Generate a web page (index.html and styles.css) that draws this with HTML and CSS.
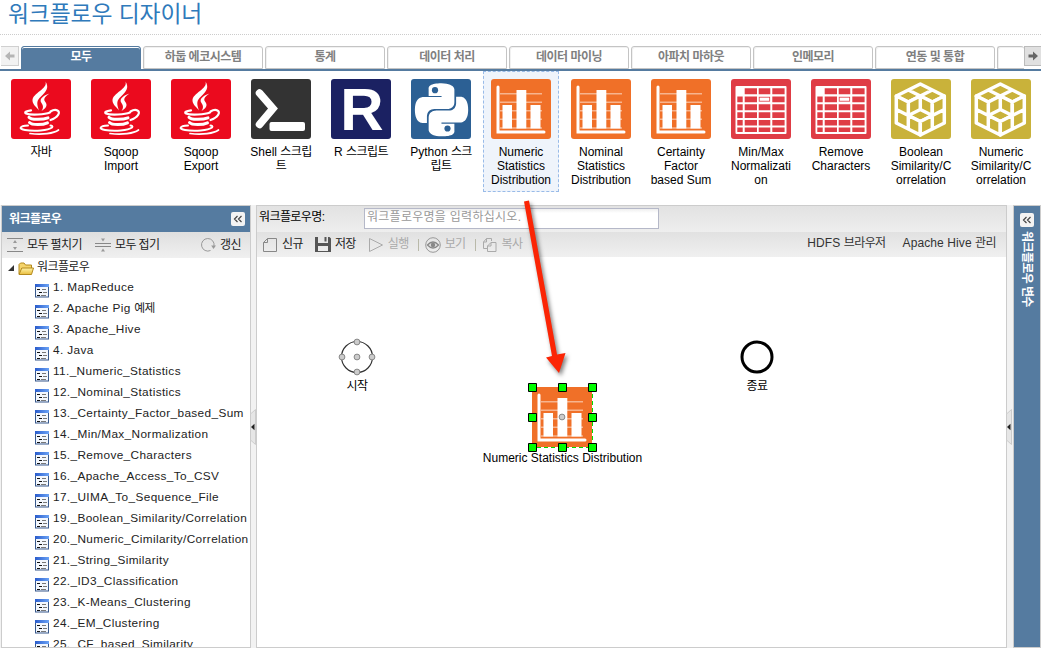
FILE: index.html
```html
<!DOCTYPE html>
<html lang="ko">
<head>
<meta charset="utf-8">
<title>워크플로우 디자이너</title>
<link rel="stylesheet" href="styles.css">
</head>
<body>
<svg class="defs" width="0" height="0">
  <symbol id="java" viewBox="0 0 60 60">
    <rect width="60" height="60" rx="3" fill="#eb0a1e"/>
    <g fill="#fff">
      <path d="M34.500 2.500C37 10 21.500 14 21.500 21.500C21.500 25.500 26 28.500 28 31.500C25.500 24.500 25.500 21.500 30 17.500C35 12.500 38.500 9 34.500 2.500Z"/>
      <path d="M38.500 14.500C31 17 28 20.500 30.500 24C32.500 27 32.500 29 30.500 32C37 28 36 25 34 22.500C32 20 34.500 17 38.500 14.500Z"/>
    </g>
    <g fill="none" stroke="#fff" stroke-linecap="round">
      <path d="M20 31.300C15 32 13 33.500 15 34.500C20 36.500 34 35.500 39 33.500" stroke-width="2.200"/>
      <path d="M39.500 32.500C45 29 50 32 47 36C45.500 38.500 42.500 40 39.500 41" stroke-width="2.200"/>
      <path d="M18 38.300C20 41 32 40.800 37 38.800M18.500 43.500C21 46.300 32 46 36.500 43.800" stroke-width="3"/>
      <path d="M17 46.500C8 47 7.500 50 14 51C24 52.500 37 51.500 41 48.500C42 47.500 41 46.500 39.500 46.500" stroke-width="2"/>
      <path d="M19 54.500C31 56 43 54.500 47.500 51" stroke-width="1.700"/>
    </g>
  </symbol>
  <symbol id="shell" viewBox="0 0 60 60">
    <rect width="60" height="60" rx="3" fill="#333"/>
    <path d="M8.500 14L22 29.500L8.500 45.500" fill="none" stroke="#fff" stroke-width="7.500" stroke-linecap="round" stroke-linejoin="miter"/>
    <rect x="18.500" y="43" width="35.500" height="9" rx="2" fill="#fff"/>
  </symbol>
  <symbol id="python" viewBox="0 0 60 60">
    <rect width="60" height="60" rx="3" fill="#2c6094"/>
    <path transform="translate(4 4.300) scale(2.210)" fill="#fff" d="M14.250.18l.9.2.73.26.59.3.45.32.34.34.25.34.16.33.1.3.04.26.02.2-.01.13V8.500l-.05.63-.13.55-.21.46-.26.38-.3.31-.33.25-.35.19-.35.14-.33.1-.3.07-.26.04-.21.02H8.770l-.69.05-.59.14-.5.22-.41.27-.33.32-.27.35-.2.36-.15.37-.1.35-.07.32-.04.27-.02.21v3.060H3.170l-.21-.03-.28-.07-.32-.12-.35-.18-.36-.26-.36-.36-.35-.46-.32-.59-.28-.73-.21-.88-.14-1.050-.05-1.230.06-1.220.16-1.040.24-.87.32-.71.36-.57.4-.44.42-.33.42-.24.4-.16.36-.1.32-.05.24-.01h.16l.06.01h8.160v-.5H6.180l-.01-3.080-.02-.37.05-.34.11-.31.17-.28.25-.26.31-.23.38-.2.44-.18.51-.15.58-.12.64-.1.71-.06.77-.04.84-.02 1.270.05zM21.040 6.110l.28.06.32.12.35.18.36.27.36.35.35.47.32.59.28.73.21.88.14 1.040.05 1.230-.06 1.230-.16 1.040-.24.86-.32.71-.36.57-.4.45-.42.33-.42.24-.4.16-.36.09-.32.05-.24.02-.16-.01h-8.220v.5h5.840l.01 3.080.02.36-.05.34-.11.31-.17.29-.25.25-.31.24-.38.2-.44.17-.51.15-.58.13-.64.09-.71.07-.77.04-.84.01-1.270-.04-1.070-.14-.9-.2-.73-.25-.59-.3-.45-.33-.34-.34-.25-.34-.16-.33-.1-.3-.04-.25-.02-.2.01-.13v-5.340l.05-.64.13-.54.21-.46.26-.38.3-.32.33-.24.35-.2.35-.14.33-.1.3-.06.26-.04.21-.02.13-.01h5.840l.69-.05.59-.14.5-.21.41-.28.33-.32.27-.35.2-.36.15-.36.1-.35.07-.32.04-.28.02-.21V6.070h2.090l.14.01z"/>
    <circle cx="24" cy="11.200" r="3.100" fill="#2c6094"/><circle cx="36.500" cy="49.500" r="3.100" fill="#2c6094"/>
  </symbol>
  <symbol id="chart" viewBox="0 0 60 60">
    <path d="M9 14.700H51M9 23.300H51M9 31.700H51M9 40.300H51M9 49H51" stroke="#fff" stroke-opacity=".48" stroke-width="1.500"/>
    <path d="M7 8V53H53" fill="none" stroke="#fff" stroke-width="3" stroke-linecap="round"/>
    <path d="M11.500 26H21V49.500H11.500ZM25.500 11H35.300V49.500H25.500ZM39.500 26H49.500V49.500H39.500Z" fill="#fff"/>
  </symbol>
  <symbol id="table" viewBox="0 0 60 60">
    <rect width="60" height="60" rx="3" fill="#df3c45"/>
    <rect x="4.500" y="7" width="51" height="48" rx="1" fill="#fff"/>
    <path fill="#df3c45" d="M13.700 9.300h12.300v6h-12.300zM27.700 9.300h11.600v6h-11.600zM41.300 9.300h12.300v6h-12.300zM6.300 17.500h5.400v5.700h-5.400zM13.700 17.500h12.300v5.700h-12.300zM41.300 17.500h12.300v5.700h-12.300zM6.300 25.200h5.400v6h-5.400zM13.700 25.200h12.300v6h-12.300zM27.700 25.200h11.600v6h-11.600zM41.300 25.200h12.300v6h-12.300zM6.300 33.300h5.400v5.700h-5.400zM13.700 33.300h12.300v5.700h-12.300zM27.700 33.300h11.600v5.700h-11.600zM41.300 33.300h12.300v5.700h-12.300zM6.300 41h5.400v5.500h-5.400zM13.700 41h12.300v5.500h-12.300zM27.700 41h11.600v5.500h-11.600zM41.300 41h12.300v5.500h-12.300zM6.300 48.500h5.400v4.500h-5.400zM13.700 48.500h12.300v4.500h-12.300zM27.700 48.500h11.600v4.500h-11.600zM41.300 48.500h12.300v4.500h-12.300z"/>
    <rect x="28.200" y="18.200" width="10.500" height="4" fill="none" stroke="#df3c45" stroke-width=".8"/>
  </symbol>
  <symbol id="cube" viewBox="0 0 60 60">
    <rect width="60" height="60" rx="3" fill="#c9b23a"/>
    <g fill="#c9b23a" stroke="#fff" stroke-width="3.500" stroke-linejoin="round">
      <path d="M29.300 5L41.300 11L29.300 17L17.300 11ZM17.300 11L29.300 17L17.300 23L5.300 17ZM41.300 11L53.300 17L41.300 23L29.300 17Z"/>
      <path d="M29.300 17V30.500L17.300 36.500V23ZM29.300 17V30.500L41.300 36.500V23ZM29.300 30.500L41.300 36.500L29.300 42.500L17.300 36.500Z"/>
      <path d="M5.300 17L17.300 23V36.500L5.300 30.500ZM5.300 30.500L17.300 36.500V50L5.300 44ZM17.300 36.500L29.300 42.500V56L17.300 50Z"/>
      <path d="M53.300 17L41.300 23V36.500L53.300 30.500ZM53.300 30.500L41.300 36.500V50L53.300 44ZM41.300 36.500L29.300 42.500V56L41.300 50Z"/>
    </g>
  </symbol>
  <linearGradient id="bar" x1="0" x2="1" y1="0" y2="0"><stop offset="0" stop-color="#2a5ccc"/><stop offset="1" stop-color="#6aa2f5"/></linearGradient>
  <linearGradient id="gold" x1="0" x2="0" y1="0" y2="1"><stop offset="0" stop-color="#fff3a8"/><stop offset="1" stop-color="#e9bd3d"/></linearGradient>
  <symbol id="doc" viewBox="0 0 14 14">
    <rect x=".5" y=".5" width="13" height="12.500" fill="#f3f7fd" stroke="#38598c"/>
    <rect width="14" height="3" fill="url(#bar)"/>
    <path d="M2 5.500H5M4 8.500H7M2 11.500H5" stroke="#111"/><path d="M7 5.500H11M8 8.500H12M6 11.500H11" stroke="#777"/>
  </symbol>
  <symbol id="fold" viewBox="0 0 14 14">
    <rect width="14" height="14" rx="2" fill="#f3f3f3"/>
    <path d="M6.500 4L3.500 7L6.500 10M10.500 4L7.500 7L10.500 10" fill="none" stroke="#444" stroke-width="1.200"/>
  </symbol>
  <symbol id="grip" viewBox="0 0 6 36">
    <path d="M5.500 .5L.5 5V31L5.500 35.500Z" fill="#e6e6e6" stroke="#ccc"/><path d="M1 18L4.500 14.800V21.200Z" fill="#222"/>
  </symbol>
</svg>

<div class="app">
  <h1 class="title">워크플로우 디자이너</h1>
  <nav class="tabs">
    <div class="scroll prev"><svg width="10" height="10" viewBox="0 0 10 10"><path d="M0 5L5 .5V3.500H9.500V6.500H5V9.500Z" fill="#b5b5b5"/></svg></div>
    <div class="tab on">모두</div><div class="tab">하둡 에코시스템</div><div class="tab">통계</div><div class="tab">데이터 처리</div><div class="tab">데이터 마이닝</div><div class="tab">아파치 마하웃</div><div class="tab">인메모리</div><div class="tab">연동 및 통합</div><div class="tab last"></div>
    <div class="scroll next"><svg width="10" height="10" viewBox="0 0 10 10"><path d="M10 5L5 .5V3.500H.5V6.500H5V9.500Z" fill="#666"/></svg></div>
  </nav>
  <section class="palette">
    <div class="item"><svg><use href="#java"/></svg><p><span class="k">자바</span></p></div>
    <div class="item"><svg><use href="#java"/></svg><p>Sqoop<br>Import</p></div>
    <div class="item"><svg><use href="#java"/></svg><p>Sqoop<br>Export</p></div>
    <div class="item"><svg><use href="#shell"/></svg><p>Shell <span class="k">스크립<br>트</span></p></div>
    <div class="item"><div class="rlang">R</div><p>R <span class="k">스크립트</span></p></div>
    <div class="item"><svg><use href="#python"/></svg><p>Python <span class="k">스크<br>립트</span></p></div>
    <div class="item picked"><svg class="orange"><use href="#chart"/></svg><p>Numeric<br>Statistics<br>Distribution</p></div>
    <div class="item"><svg class="orange"><use href="#chart"/></svg><p>Nominal<br>Statistics<br>Distribution</p></div>
    <div class="item"><svg class="orange"><use href="#chart"/></svg><p>Certainty<br>Factor<br>based Sum</p></div>
    <div class="item"><svg><use href="#table"/></svg><p>Min/Max<br>Normalizati<br>on</p></div>
    <div class="item"><svg><use href="#table"/></svg><p>Remove<br>Characters</p></div>
    <div class="item"><svg><use href="#cube"/></svg><p>Boolean<br>Similarity/C<br>orrelation</p></div>
    <div class="item"><svg><use href="#cube"/></svg><p>Numeric<br>Similarity/C<br>orrelation</p></div>
  </section>

  <main class="work">
    <aside class="side">
      <header class="side-head"><b>워크플로우</b><svg width="14" height="14"><use href="#fold"/></svg></header>
      <div class="side-tools">
        <svg width="16" height="16" viewBox="0 0 16 16"><path d="M0 1.500H16M0 14.500H16" stroke="#888"/><path d="M6 6L8 3L10 6ZM6 10L8 13L10 10Z" fill="#999"/></svg><span class="k expand">모두 펼치기</span>
        <svg width="16" height="16" viewBox="0 0 16 16"><path d="M0 6.500H16M0 9.500H16" stroke="#888"/><path d="M6 1.500H10L8 4.500ZM6 14.500H10L8 11.500Z" fill="#999"/></svg><span class="k collapse">모두 접기</span>
        <svg class="refresh" width="16" height="16" viewBox="0 0 16 16"><path d="M10.500 13.500A6.300 6.300 0 1 1 14 9" fill="none" stroke="#999"/><path d="M11.200 8.500H16L13.500 12Z" fill="#999"/></svg><span class="k">갱신</span>
      </div>
      <div class="tree">
        <div class="root"><svg width="6" height="6" viewBox="0 0 6 6"><path d="M6 0V6H0Z" fill="#333"/></svg><svg class="folder" width="16" height="14" viewBox="0 0 16 14"><path d="M1 12V2.500L2.500 1H6L7.500 3H13.500V6" fill="#f5d46b" stroke="#b48a1e"/><path d="M1 12.500L3.800 6H15.500L13.500 12.500Z" fill="url(#gold)" stroke="#b48a1e"/></svg><span class="k">워크플로우</span></div>
        <div class="row"><svg><use href="#doc"/></svg>1. MapReduce</div>
        <div class="row"><svg><use href="#doc"/></svg>2. Apache Pig <span class="k">예제</span></div>
        <div class="row"><svg><use href="#doc"/></svg>3. Apache_Hive</div>
        <div class="row"><svg><use href="#doc"/></svg>4. Java</div>
        <div class="row"><svg><use href="#doc"/></svg>11._Numeric_Statistics</div>
        <div class="row"><svg><use href="#doc"/></svg>12._Nominal_Statistics</div>
        <div class="row"><svg><use href="#doc"/></svg>13._Certainty_Factor_based_Sum</div>
        <div class="row"><svg><use href="#doc"/></svg>14._Min/Max_Normalization</div>
        <div class="row"><svg><use href="#doc"/></svg>15._Remove_Characters</div>
        <div class="row"><svg><use href="#doc"/></svg>16._Apache_Access_To_CSV</div>
        <div class="row"><svg><use href="#doc"/></svg>17._UIMA_To_Sequence_File</div>
        <div class="row"><svg><use href="#doc"/></svg>19._Boolean_Similarity/Correlation</div>
        <div class="row"><svg><use href="#doc"/></svg>20._Numeric_Cimilarity/Correlation</div>
        <div class="row"><svg><use href="#doc"/></svg>21._String_Similarity</div>
        <div class="row"><svg><use href="#doc"/></svg>22._ID3_Classification</div>
        <div class="row"><svg><use href="#doc"/></svg>23._K-Means_Clustering</div>
        <div class="row"><svg><use href="#doc"/></svg>24._EM_Clustering</div>
        <div class="row"><svg><use href="#doc"/></svg>25._CF_based_Similarity</div>
      </div>
    </aside>
    <div class="split"><svg width="6" height="36"><use href="#grip"/></svg></div>
    <section class="editor">
      <div class="name-row"><label class="k">워크플로우명:</label><div class="field">워크플로우명을 입력하십시오.</div></div>
      <div class="tools">
        <svg width="16" height="16" viewBox="0 0 16 16"><path d="M5.500 1.500H14.500V14.500H1.500V5.500ZM5.500 1.500V5.500H1.500" fill="none" stroke="#888"/></svg><span class="k">신규</span>
        <svg width="16" height="16" viewBox="0 0 16 16"><path d="M0 0H3V6H13V0H14.500L16 1.500V15H0ZM9.500 0H11.500V4.500H9.500ZM3 9V14H13V9Z" fill="#555" fill-rule="evenodd"/></svg><span class="k">저장</span>
        <svg width="16" height="16" viewBox="0 0 16 16"><path d="M1.500 1.500L14.500 8L1.500 14.500Z" fill="none" stroke="#aaa"/></svg><span class="k off">실행</span>
        <i></i>
        <svg width="16" height="16" viewBox="0 0 16 16"><circle cx="8" cy="8" r="7.300" fill="none" stroke="#999"/><path d="M2.500 8Q8 2 13.500 8Q8 14 2.500 8Z" fill="none" stroke="#888" stroke-width="1.300"/><circle cx="8" cy="8" r="2.300" fill="#888"/></svg><span class="k off">보기</span>
        <i></i>
        <svg width="16" height="16" viewBox="0 0 16 16"><path d="M5 11.500H1.500V5L4.500 1.500H9.500V4M4.500 1.500V5H1.500M9 5.500H14V14.500H5.500V9ZM9 5.500V9H5.500" fill="none" stroke="#aaa"/></svg><span class="k off">복사</span>
        <span class="link hdfs">HDFS <span class="k">브라우저</span></span><span class="link">Apache Hive <span class="k">관리</span></span>
      </div>
      <div class="canvas">
        <div class="node start"><svg width="38" height="38" viewBox="0 0 38 38"><circle cx="19" cy="19" r="15.500" fill="#fff" stroke="#333" stroke-width="1.200"/><g fill="#ccc" stroke="#888"><circle cx="19" cy="4" r="2.900"/><circle cx="4" cy="19" r="2.900"/><circle cx="34" cy="19" r="2.900"/><circle cx="19" cy="34" r="2.900"/><circle cx="19" cy="19" r="2.900"/></g></svg><span class="k">시작</span></div>
        <div class="node end"><svg width="38" height="38" viewBox="0 0 38 38"><circle cx="19" cy="19" r="15" fill="#fff" stroke="#000" stroke-width="3"/></svg><span class="k">종료</span></div>
        <div class="node stat"><svg width="71" height="71" viewBox="0 0 71 71"><rect x="5" y="5" width="60" height="60" fill="#f07028"/><use href="#chart" x="5" y="5" width="60" height="60"/><path d="M65.500 5V65.500H5" fill="none" stroke="#fff"/><path d="M65.500 5V65.500H5" fill="none" stroke="#0d0" stroke-dasharray="4 3"/><circle cx="35" cy="35" r="2.900" fill="#ccc" stroke="#888"/><path fill="#0f0" stroke="#000" d="M1.500 1.500h8v8h-8zM31.500 1.500h8v8h-8zM61.500 1.500h8v8h-8zM1.500 31.500h8v8h-8zM61.500 31.500h8v8h-8zM1.500 61.500h8v8h-8zM31.500 61.500h8v8h-8zM61.500 61.500h8v8h-8z"/></svg><span>Numeric Statistics Distribution</span></div>
      </div>
    </section>
    <div class="split right"><svg width="6" height="36"><use href="#grip"/></svg></div>
    <aside class="vars"><svg width="14" height="14"><use href="#fold"/></svg><b>워크플로우 변수</b></aside>
  </main>
  <svg class="arrow" width="60" height="190" viewBox="0 0 60 190"><path d="M10 5.500L15 4.500L43 158.500L51.500 157L45 177L32 161.500L38 160Z" fill="#fb2505"/></svg>
</div>
</body>
</html>
```
FILE: styles.css
```css
* { box-sizing: border-box; }
body { margin: 0; background: #fff; font: 12px/14px "Liberation Sans", "Noto Sans CJK KR", sans-serif; color: #000; overflow: hidden; }
svg { display: block; flex: none; }
.defs { position: absolute; }
.k { letter-spacing: -.6px; }
.app { position: relative; width: 1041px; height: 648px; overflow: hidden; display: flex; flex-direction: column; }
.title { margin: 0; height: 35px; padding: 0 0 0 8px; border-bottom: 1px dotted #ccc; font: 400 22.800px/25px "Noto Sans CJK KR", sans-serif; letter-spacing: -.1px; color: #2f7abb; flex: none; }

.tabs { display: flex; height: 36px; padding: 11px 0 0; border-bottom: 2px solid #557ba0; gap: 2px; flex: none; }
.tab { width: 120px; height: 23px; flex: none; border: 1px solid #c4c4c4; border-radius: 3px 3px 0 0; box-shadow: inset 1px 1px #f1f1f1; text-align: center; font-weight: bold; line-height: 20px; letter-spacing: -.5px; color: #808080; }
.tab.on { background: #557ba0; color: #fff; border-color: #557ba0; box-shadow: inset 0 1px #fff; height: 24px; }
.tab.last { width: 27px; border-right: 0; }
.scroll { width: 18px; height: 20px; flex: none; border: 1px solid #d0d0d0; background: #f2f2f2; display: flex; align-items: center; justify-content: center; margin-left: 1px; }
.scroll.prev { border-left: 0; }
.scroll.next { margin-left: -2px; background: #e0e0e0; border-color: #bbb; }

.palette { display: flex; height: 134px; padding-left: 1px; flex: none; }
.item { width: 80px; flex: none; height: 121px; padding-top: 8px; display: flex; flex-direction: column; align-items: center; }
.item svg { width: 60px; height: 60px; }
.item p { margin: 6px 0 0; text-align: center; white-space: nowrap; }
.picked { width: 76px; margin: 0 2px; padding-top: 7px; border: 1px dashed #99bbe8; background: #eff4fb; }
.orange { background: #f07028; border-radius: 3px; }
.rlang { width: 60px; height: 60px; flex: none; padding-left: 2px; border-radius: 3px; background: #1b2162; color: #fff; font: bold 60px/62px "Liberation Sans", sans-serif; text-align: center; }

.work { display: flex; flex: 1; min-height: 0; background: #f2f2f2; padding-left: 1px; }
.side { width: 250px; border: 1px solid #ccc; background: #fff; display: flex; flex-direction: column; overflow: hidden; flex: none; }
.side-head { height: 26px; background: #557ba0; color: #fff; display: flex; align-items: center; justify-content: space-between; padding: 0 5px 1px 7px; letter-spacing: -.6px; flex: none; }
.side-tools { height: 26px; background: linear-gradient(#dfdfdf, #f0f0f0); display: flex; align-items: center; padding: 0 9px 0 5px; color: #222; flex: none; }
.side-tools .k { margin-left: 4px; padding-bottom: 1px; }
.expand { width: 68px; }
.side-tools svg.refresh { margin-left: auto; }
.tree { flex: 1; overflow: hidden; white-space: nowrap; color: #222; }
.root { display: flex; height: 19px; align-items: center; padding-left: 6px; }
.root .k { padding-bottom: 1px; }
.folder { margin: 2px 3px 0 4px; }
.row { height: 21px; display: flex; align-items: center; padding: 0 0 2px 33px; font-size: 11.800px; letter-spacing: .37px; white-space: pre; }
.row svg { width: 14px; height: 14px; margin: 8px 4px 0 0; }

.split { width: 5px; flex: none; display: flex; align-items: center; }
.split svg { margin-left: -1px; }
.split.right { width: 6px; }
.editor { width: 751px; flex: none; border: 1px solid #ccc; background: #fff; display: flex; flex-direction: column; }
.name-row { height: 26px; background: linear-gradient(#e2e2e2, #eee); display: flex; padding: 2px 0 0 2px; flex: none; line-height: 18px; }
.name-row label { width: 105px; }
.field { width: 295px; height: 21px; border: 1px solid #b5b8c8; background: linear-gradient(#eee, #fff 4px); color: #999; padding-left: 2px; line-height: 16px; letter-spacing: .27px; }
.tools { height: 25px; background: linear-gradient(#e1e1e1, #f0f0f0); display: flex; align-items: center; padding: 0 10px 0 5px; color: #222; flex: none; }
.tools > .k { margin: 0 12px 2px 4px; }
.tools .off { color: #aaa; }
.tools i { width: 1px; height: 12px; background: #b9b9a9; margin: 0 6px 0 -3px; }
.link { color: #333; padding-bottom: 3px; white-space: pre; letter-spacing: .1px; }
.hdfs { margin: 0 17px 0 auto; }
.canvas { position: relative; flex: 1; }
.node { position: absolute; display: flex; flex-direction: column; align-items: center; white-space: nowrap; }
.start { left: 81px; top: 81px; }
.end { left: 481px; top: 81px; }
.start span, .end span { margin-top: 3px; }
.stat { left: 225px; top: 125px; width: 161px; }
.stat span { margin-top: -2px; }

.vars { width: 28px; border: 1px solid #ccc; background: #557ba0; color: #fff; display: flex; flex-direction: column; align-items: center; padding-top: 7px; flex: none; }
.vars b { writing-mode: vertical-rl; margin-top: 4px; letter-spacing: -.6px; text-orientation: sideways; }
.arrow { position: absolute; left: 514px; top: 196px; filter: drop-shadow(2px 3px 2px rgba(0,0,0,.5)); }
```
